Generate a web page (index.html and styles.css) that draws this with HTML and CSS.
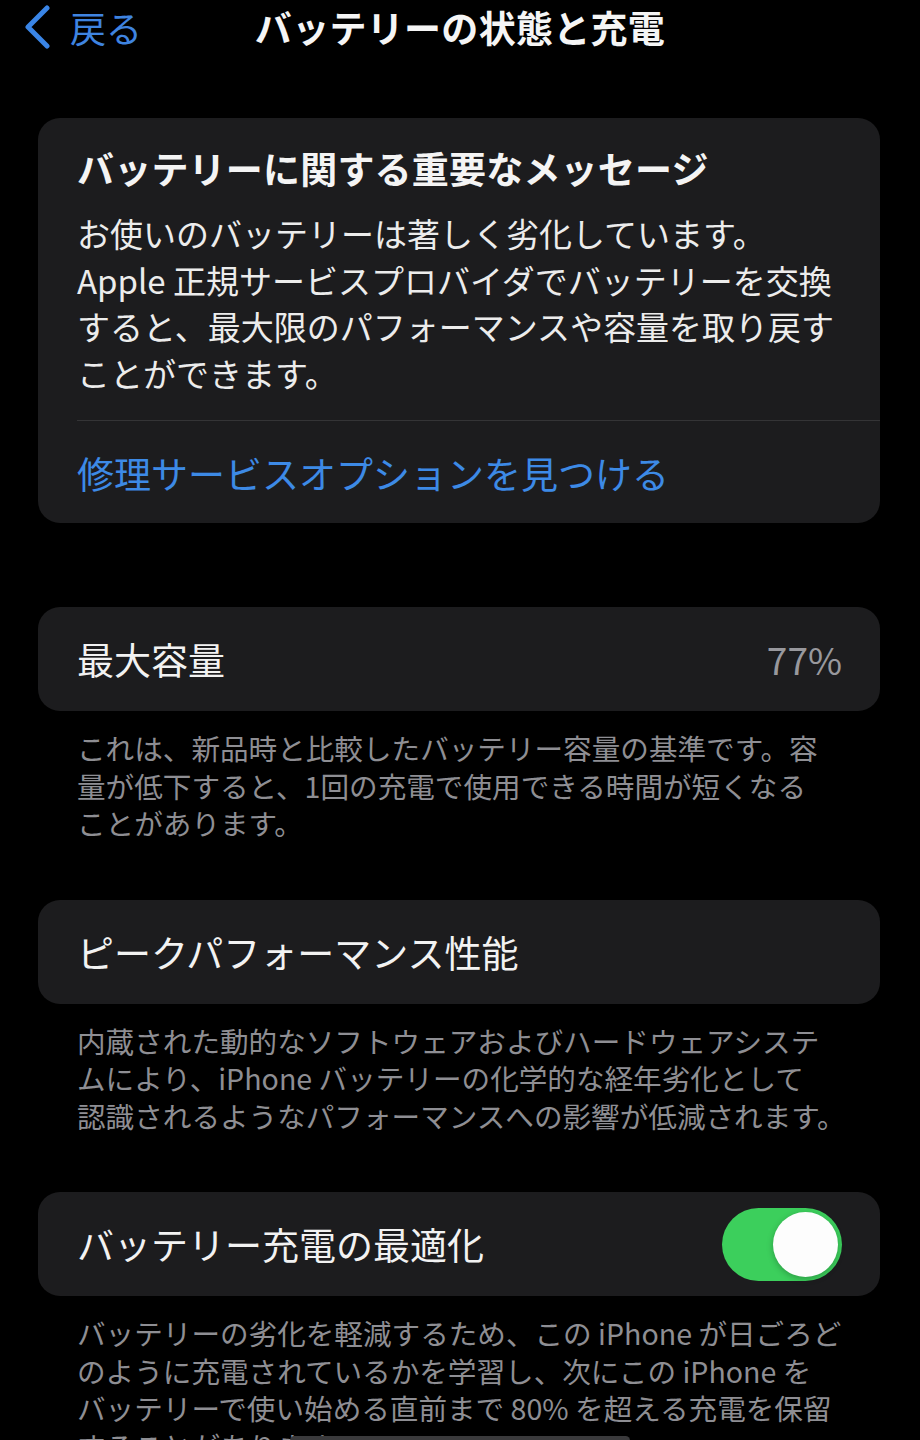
FILE: index.html
```html
<!DOCTYPE html>
<html lang="ja">
<head>
<meta charset="utf-8">
<title>バッテリーの状態と充電</title>
<link rel="stylesheet" href="styles.css">
</head>
<body>
<div class="screen">
  <header class="nav">
    <a class="back">
      <svg class="chev" width="30" height="44" viewBox="0 0 30 44"><path d="M25 3 L6 22 L25 41" fill="none" stroke="#3a85e6" stroke-width="5" stroke-linecap="round" stroke-linejoin="round"/></svg>
      <span class="back-label">戻る</span>
    </a>
    <h1 class="title">バッテリーの状態と充電</h1>
    <div class="nav-spacer"></div>
  </header>

  <main class="content">
    <section class="card message">
      <h2 class="msg-title">バッテリーに関する重要なメッセージ</h2>
      <p class="msg-body">お使いのバッテリーは著しく劣化しています。<br>Apple 正規サービスプロバイダでバッテリーを交換<br>すると、最大限のパフォーマンスや容量を取り戻す<br>ことができます。</p>
      <div class="divider"></div>
      <a class="link">修理サービスオプションを見つける</a>
    </section>

    <section class="group first">
      <div class="card row">
        <span class="row-label">最大容量</span>
        <span class="row-value">77%</span>
      </div>
      <p class="footnote">これは、新品時と比較したバッテリー容量の基準です。容<br>量が低下すると、1回の充電で使用できる時間が短くなる<br>ことがあります。</p>
    </section>

    <section class="group">
      <div class="card row">
        <span class="row-label">ピークパフォーマンス性能</span>
      </div>
      <p class="footnote">内蔵された動的なソフトウェアおよびハードウェアシステ<br>ムにより、iPhone バッテリーの化学的な経年劣化として<br>認識されるようなパフォーマンスへの影響が低減されます。</p>
    </section>

    <section class="group">
      <div class="card row">
        <span class="row-label">バッテリー充電の最適化</span>
        <span class="toggle on"><span class="knob"></span></span>
      </div>
      <p class="footnote">バッテリーの劣化を軽減するため、この iPhone が日ごろど<br>のように充電されているかを学習し、次にこの iPhone を<br>バッテリーで使い始める直前まで 80% を超える充電を保留<br>することがあります。</p>
    </section>
  </main>
  <div class="home-indicator"></div>
</div>
</body>
</html>
```

FILE: styles.css
```css
html, body {
  margin: 0;
  padding: 0;
  background: #000;
}

body {
  font-family: "Noto Sans CJK JP", "Noto Sans", sans-serif;
  color: #f2f2f2;
  overflow: hidden;
}

.screen {
  width: 920px;
  height: 1440px;
  overflow: hidden;
}

.nav {
  display: grid;
  grid-template-columns: 1fr auto 1fr;
  align-items: center;
  height: 54px;
  padding: 0 22px;
}

.back {
  display: flex;
  align-items: center;
  gap: 18px;
  color: #3f84e0;
}

.chev {
  display: block;
}

.back-label {
  font-size: 36px;
  line-height: 52px;
}

.title {
  margin: 0;
  font-size: 37px;
  font-weight: 700;
  line-height: 54px;
  color: #f5f5f5;
  letter-spacing: 0.3px;
}

.content {
  padding: 64px 40px 0 38px;
}

.card {
  background: #1c1c1e;
  border-radius: 22px;
}

.message {
  padding: 25px 0 25px 39px;
}

.msg-title {
  margin: 0;
  font-size: 37px;
  font-weight: 700;
  line-height: 50px;
  color: #f4f4f4;
  letter-spacing: 0.2px;
}

.msg-body {
  margin: 17px 0 0;
  font-size: 33px;
  line-height: 46.5px;
  color: #ececec;
  white-space: nowrap;
}

.divider {
  margin-top: 24px;
  height: 1px;
  background: #343436;
}

.link {
  display: block;
  padding-top: 27px;
  font-size: 37px;
  line-height: 50px;
  color: #3d8ae6;
}

.group {
  margin-top: 58px;
}

.group.first {
  margin-top: 84px;
}

.row {
  display: flex;
  align-items: center;
  justify-content: space-between;
  height: 104px;
  padding: 0 38px 0 39px;
}

.row-label {
  font-size: 37px;
  line-height: 50px;
  color: #f2f2f2;
}

.row-value {
  font-size: 37px;
  line-height: 50px;
  color: #98989d;
}

.footnote {
  margin: 18px 0 0;
  padding-left: 39px;
  font-size: 28.6px;
  line-height: 37.5px;
  color: #8e8e93;
  white-space: nowrap;
}

.toggle {
  display: flex;
  align-items: center;
  justify-content: flex-end;
  width: 120px;
  height: 73px;
  padding: 0 4px;
  box-sizing: border-box;
  border-radius: 37px;
  background: #3ccf5c;
}

.knob {
  width: 65px;
  height: 65px;
  border-radius: 50%;
  background: #fdfdfd;
  box-shadow: 0 2px 6px rgba(0, 0, 0, 0.25);
}

.home-indicator {
  position: fixed;
  left: 290px;
  bottom: -5px;
  width: 340px;
  height: 9px;
  border-radius: 5px;
  background: #3a3a3c;
}
```
